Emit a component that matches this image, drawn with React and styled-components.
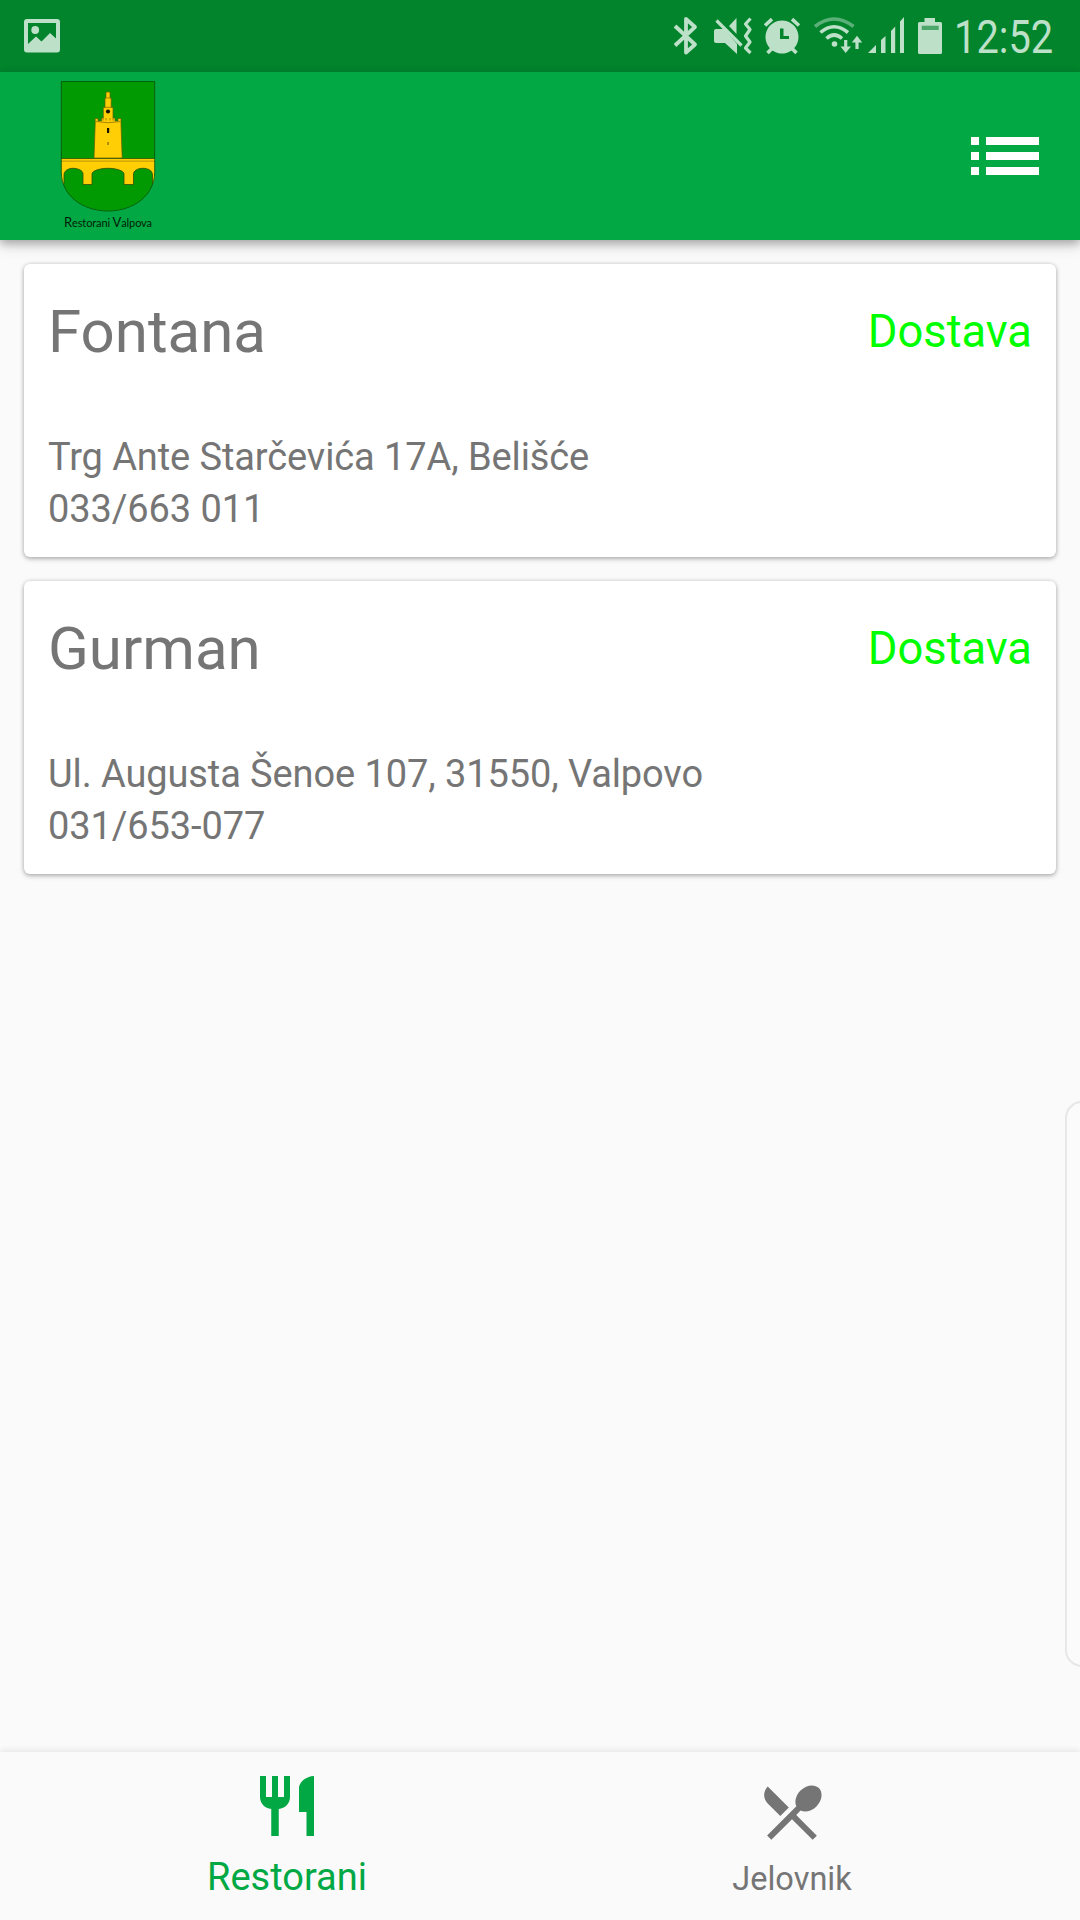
import React from "react";
import styled, { createGlobalStyle } from "styled-components";

const GREEN = "#02a844";
const GREEN_DARK = "#02842c";
const TINT = "#bce0c8";
const GREY = "#757575";

const GlobalStyle = createGlobalStyle`
  * { box-sizing: border-box; }
  body { margin: 0; background: #fafafa; font-family: Roboto, "Noto Sans", sans-serif; }
`;

const Screen = styled.div`
  position: relative;
  display: flex;
  flex-direction: column;
  width: 1080px;
  height: 1920px;
  overflow: hidden;
  background: #fafafa;
`;

const StatusBar = styled.header`
  display: flex;
  justify-content: space-between;
  height: 72px;
  padding: 0 27px 0 23px;
  background: ${GREEN_DARK};
  color: ${TINT};
  svg { display: block; fill: currentColor; flex: none; }
`;

const StatusIcons = styled.div`
  display: flex;
`;

const BatteryIcon = styled.svg`
  margin-right: 10px;
`;

const Clock = styled.span`
  width: 99px;
  font-size: 45.5px;
  line-height: 75px;
  white-space: nowrap;
  span {
    display: inline-block;
    transform: scaleX(0.875);
    transform-origin: left;
  }
`;

const Toolbar = styled.div`
  display: flex;
  align-items: center;
  justify-content: space-between;
  height: 168px;
  padding: 0 41px 0 60px;
  background: ${GREEN};
  box-shadow: 0 4px 8px rgba(0, 0, 0, 0.24), 0 6px 14px rgba(0, 0, 0, 0.12);
  z-index: 1;
`;

const MenuButton = styled.button`
  display: grid;
  grid-template-columns: 8px 53px;
  grid-auto-rows: 8px;
  gap: 7px;
  padding: 0;
  border: 0;
  background: none;
  span { background: #fff; }
`;

const List = styled.main`
  display: flex;
  flex: 1;
  flex-direction: column;
  gap: 24px;
  padding: 24px;
`;

const Card = styled.article`
  height: 293px;
  padding: 24px;
  border-radius: 6px;
  background: #fff;
  color: ${GREY};
  box-shadow: 0 2px 5px rgba(0, 0, 0, 0.26), 0 0 4px rgba(0, 0, 0, 0.14);
`;

const CardHead = styled.div`
  display: flex;
  align-items: center;
  justify-content: space-between;
  height: 86px;
  margin-bottom: 57px;
`;

const Name = styled.h2`
  margin: 0;
  padding-top: 2px;
  font-size: 60px;
  font-weight: 400;
  line-height: 86px;
`;

const Delivery = styled.span`
  padding-top: 2px;
  color: #00ff00;
  font-size: 45.3px;
  line-height: 84px;
`;

const Detail = styled.p`
  margin: 0;
  font-size: 38px;
  letter-spacing: -0.1px;
  line-height: 52px;
  white-space: nowrap;
`;

const EdgeHandle = styled.div`
  position: absolute;
  top: 1101px;
  right: -6px;
  width: 21px;
  height: 566px;
  border: 2px solid #e7e7e7;
  border-radius: 17px 0 0 17px;
  background: #fbfbfb;
`;

const BottomNav = styled.nav`
  display: flex;
  justify-content: center;
  height: 168px;
  background: #fafafa;
  box-shadow: 0 -1px 7px rgba(0, 0, 0, 0.1);
`;

const NavItem = styled.a`
  display: flex;
  flex-direction: column;
  align-items: center;
  width: 504px;
  padding-top: ${(p) => (p.$active ? 18 : 24)}px;
  padding-right: ${(p) => (p.$active ? 2 : 0)}px;
  color: ${(p) => (p.$active ? GREEN : GREY)};
  font-size: ${(p) => (p.$active ? 38 : 32.5)}px;
  svg { display: block; width: 72px; height: 72px; fill: currentColor; }
  span {
    margin-top: ${(p) => (p.$active ? 13 : 9)}px;
    line-height: 44px;
  }
`;

function Logo() {
  return (
    <svg width="96" height="152" viewBox="60 80 96 152">
      <defs>
        <clipPath id="shield">
          <path d="M61 81H155V172C155 195 134 211 108 211S61 195 61 172Z" />
        </clipPath>
      </defs>
      <g clipPath="url(#shield)">
        <path d="M60 80h96v132H60z" fill="#029a02" />
        <path
          d="M60 158.500H156V184H152.500V175C152.500 170.500 148 168.300 142.700 168.300S133.500 171 133.500 174V184.500H124V174C124 171 117 168.300 108 168.300S92 171 92 174V184.500H83V174C83 170.500 78 168.300 73 168.300S64 171 64 175V184H60Z"
          fill="#ffce05" stroke="#34500a" strokeWidth="0.8"
        />
        <path d="M60 161.200H156" stroke="#c89f08" strokeWidth="1.200" />
      </g>
      <path
        d="M106 92H110V98H111.200V107.500H113V118H115V121H118V118.500H121V123.500L122.200 158H94L95.200 123.500V118.500H98V121H101.500V118H103.300V107.500H105V98H106Z"
        fill="#ffce05" stroke="#5f5f08" strokeWidth="0.700"
      />
      <path d="M105 98H111M103.500 107.300H113M96 121.500Q108 124 120.500 121.500M103 118V120.500M106 118V120.500M110 118V120.500M113 118V120.500" fill="none" stroke="#8f7406" strokeWidth="0.800" />
      <circle cx="108" cy="111.500" r="2.100" fill="#171300" />
      <rect x="107" y="128" width="2.200" height="5" fill="#171300" />
      <rect x="107.400" y="142" width="1.400" height="3" fill="#8f7406" />
      <path d="M61.300 81.500H154.700V172C154.700 195 134 211 108 211S61.300 195 61.300 172Z" fill="none" stroke="#075a10" strokeWidth="0.900" />
      <text x="64" y="226.500" fontFamily="Lato, sans-serif" fontSize="11" textLength="88" lengthAdjust="spacing" fill="#021c08">
        <tspan fontSize="13">R</tspan>estorani <tspan fontSize="13">V</tspan>alpova
      </text>
    </svg>
  );
}

function Restaurant({ name, address, phone }) {
  return (
    <Card>
      <CardHead>
        <Name>{name}</Name>
        <Delivery>Dostava</Delivery>
      </CardHead>
      <Detail>{address}</Detail>
      <Detail>{phone}</Detail>
    </Card>
  );
}

export default function App() {
  return (
    <Screen>
      <GlobalStyle />
      <StatusBar>
        <svg width="38" height="72" viewBox="23 0 38 72">
          <path fillRule="evenodd" d="M27 19H57Q60 19 60 22V49.500Q60 52.500 57 52.500H27Q24 52.500 24 49.500V22Q24 19 27 19ZM28 23V44L36 36.500L41.500 41.500L50 33L56 38.500V23Z" />
          <circle cx="35.200" cy="30" r="3.900" />
        </svg>
        <StatusIcons>
          <svg width="38" height="72" viewBox="672 0 38 72">
            <path d="M675 26L695 44.500L686 52.500V19L695 27L675 45.500" fill="none" stroke="currentColor" strokeWidth="3.800" strokeLinejoin="round" />
          </svg>
          <svg width="50" height="72" viewBox="710 0 50 72">
            <path d="M716 29H724L737 44V54L725 43H716Q714 43 714 41V31Q714 29 716 29ZM729 26L736.500 18V34Z" />
            <path d="M716.500 20.500L741.500 45.500" stroke="currentColor" strokeWidth="3.200" />
            <path d="M750.500 18.500L745.500 24L750 29.500L745.500 36L750 42L745.500 48L750.500 53" fill="none" stroke="currentColor" strokeWidth="3.200" strokeLinejoin="round" />
          </svg>
          <svg width="50" height="72" viewBox="760 0 50 72">
            <path fillRule="evenodd" d="M782 20.500A16.500 16.500 0 1 1 781.990 20.500ZM780 28.500V39H789V36H783.500V28.500Z" />
            <path d="M765 25.500L772 19.200M792 19.200L799 25.500M772.500 48L767.500 53M791.500 48L796.500 53" stroke="currentColor" strokeWidth="3.600" />
          </svg>
          <svg width="56" height="72" viewBox="810 0 56 72">
            <g fill="none" stroke="currentColor" strokeWidth="3.600">
              <path d="M815 26.500Q834 11.500 853.500 26.500" opacity="0.480" />
              <path d="M820.500 32.500Q834 21 848 32.500M826.500 38.500Q834 31.500 842 38.500" />
              <path d="M845.700 40V50M857 49V39" strokeWidth="3.200" />
            </g>
            <circle cx="834.500" cy="44" r="2.800" />
            <path d="M840.500 46.500H851L845.700 53ZM851.800 42.500H862.200L857 35.800Z" />
          </svg>
          <svg width="46" height="72" viewBox="866 0 46 72">
            <path d="M868 53L876 45V53ZM881 53V40L885.500 36V53ZM891 53V31L895.200 26.500V53ZM900 53V21.500L904 17V53Z" />
          </svg>
          <BatteryIcon width="32" height="72" viewBox="912 0 32 72">
            <path d="M924.500 18H935V22H940.500Q942 22 942 23.500V52.500Q942 54 940.500 54H919.500Q918 54 918 52.500V23.500Q918 22 919.500 22H924.500Z" />
            <path d="M921.700 25.700H938.700V30H921.700Z" fill="#4da76b" />
          </BatteryIcon>
          <Clock><span>12:52</span></Clock>
        </StatusIcons>
      </StatusBar>
      <Toolbar>
        <Logo />
        <MenuButton aria-label="Menu">
          <span /><span /><span /><span /><span /><span />
        </MenuButton>
      </Toolbar>
      <List>
        <Restaurant name="Fontana" address="Trg Ante Starčevića 17A, Belišće" phone="033/663 011" />
        <Restaurant name="Gurman" address="Ul. Augusta Šenoe 107, 31550, Valpovo" phone="031/653-077" />
      </List>
      <BottomNav>
        <NavItem $active>
          <svg viewBox="0 0 24 24">
            <path d="M11 9H9V2H7v7H5V2H3v7c0 2.120 1.660 3.840 3.750 3.970V22h2.500v-9.030C11.340 12.840 13 11.120 13 9V2h-2v7zm5-3v8h2.500v8H21V2c-2.760 0-5 2.240-5 4z" />
          </svg>
          <span>Restorani</span>
        </NavItem>
        <NavItem>
          <svg viewBox="0 0 24 24">
            <path d="M8.100 13.340l2.830-2.830L3.910 3.500c-1.560 1.560-1.560 4.090 0 5.660l4.190 4.180zm6.780-1.810c1.530.71 3.680.21 5.270-1.380 1.910-1.910 2.280-4.650.81-6.120-1.460-1.460-4.200-1.100-6.120.81-1.590 1.590-2.090 3.740-1.380 5.270L3.700 19.870l1.410 1.410L12 14.410l6.880 6.880 1.410-1.410L13.410 13l1.470-1.470z" />
          </svg>
          <span>Jelovnik</span>
        </NavItem>
      </BottomNav>
      <EdgeHandle />
    </Screen>
  );
}
